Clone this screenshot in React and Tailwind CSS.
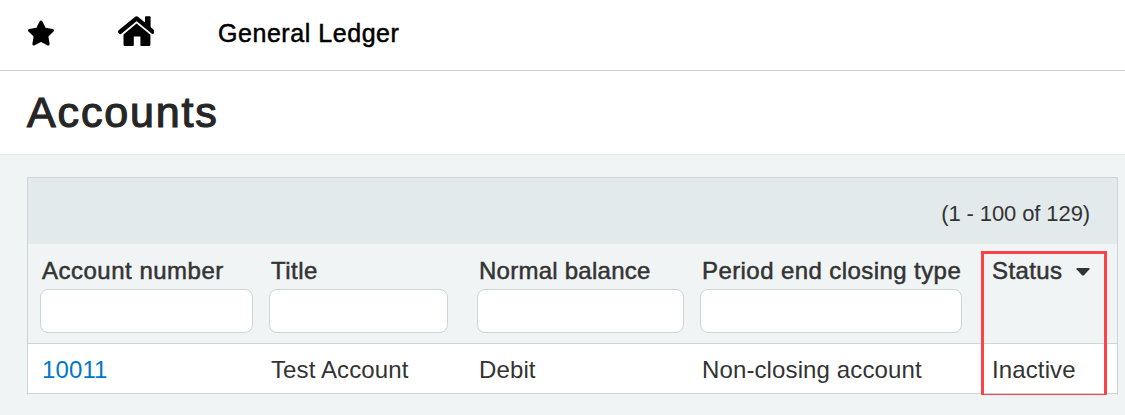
import { FaStar } from "react-icons/fa";

const columns = [
  {
    label: "Account number",
    value: "10011",
    input: "w-[213px]",
    spacing: "tracking-[0.5px]",
    link: true,
  },
  {
    label: "Title",
    value: "Test Account",
    input: "w-[179px]",
    spacing: "tracking-[0.5px]",
  },
  {
    label: "Normal balance",
    value: "Debit",
    input: "w-[207px]",
    spacing: "tracking-[0.25px]",
  },
  {
    label: "Period end closing type",
    value: "Non-closing account",
    input: "w-[262px]",
    spacing: "tracking-[0.42px]",
  },
  {
    label: "Status",
    value: "Inactive",
    spacing: "tracking-[0.4px]",
    sorted: true,
  },
];

const gridCols = "grid grid-cols-[229px_208px_223px_290px_1fr]";

function HomeIcon() {
  return (
    <svg viewBox="0 0 36 30" className="h-[30px] w-[36px]" fill="black">
      <path
        d="M2.3 15.8 18.6 2.4 34.6 15.6"
        fill="none"
        stroke="black"
        strokeWidth="4.4"
        strokeLinecap="round"
        strokeLinejoin="round"
      />
      <path d="M27 1.2q0-1 1-1h3.6q1 0 1 1v13.3L27 9.8z" />
      <path d="M18.6 7.6 32.4 18.8v9.7q0 1.5-1.5 1.5H23.4q-1 0-1-1v-8.4h-6.6v8.4q0 1-1 1H7q-1.5 0-1.5-1.5V18.4z" />
    </svg>
  );
}

export default function App() {
  return (
    <main className="flex h-[415px] flex-col overflow-hidden bg-[#f0f4f5] font-['Liberation_Sans',sans-serif] text-[#333]">
      <nav className="flex h-[71px] items-center border-b border-[#ccd6da] bg-white pb-1 pl-[27px] text-black">
        <FaStar className="h-[26px] w-[28px]" />
        <div className="ml-[63px] mt-[-4px]">
          <HomeIcon />
        </div>
        <span className="ml-[64px] mt-[2px] text-[25px] tracking-[0.55px] [-webkit-text-stroke:0.5px]">
          General Ledger
        </span>
      </nav>
      <header className="flex h-[84px] items-center border-b border-[#e2eaec] bg-white pl-[27px]">
        <h1 className="mt-[-1px] text-[43px] leading-[50px] tracking-[1.85px] text-[#262626] [-webkit-text-stroke:1.2px]">
          Accounts
        </h1>
      </header>

      <section className="pl-[27px] pr-[7px] pt-[22px]">
        <div className="relative h-[218px] border-x border-t border-[#ccd6da]">
          <div className="flex h-[66px] items-center justify-end bg-[#e2eaec] pr-[27px] pt-[5px] text-[22px] tracking-[-0.1px]">
            (1 - 100 of 129)
          </div>
          <div className={`${gridCols} h-[100px] border-b border-[#ccd6da]`}>
            {columns.map((col) => (
              <div key={col.label} className="pl-3 pt-[10px]">
                <div
                  className={`${col.spacing} mb-[2px] flex h-[33px] items-center whitespace-nowrap pl-[2px] text-[24px] leading-[30px] [-webkit-text-stroke:0.5px]`}
                >
                  {col.label}
                  {col.sorted && (
                    <svg
                      viewBox="0 0 14 8"
                      className="ml-[14px] mt-[2px] h-[8px] w-[14px]"
                    >
                      <path d="M1 0h12q1 .2.4 1.2L8 7.2q-1 .9-2 0L.6 1.2Q0 .2 1 0z" fill="#333" />
                    </svg>
                  )}
                </div>
                {col.input && (
                  <input
                    className={`${col.input} block h-[44px] rounded-lg border border-[#ccd6da] bg-white px-3`}
                  />
                )}
              </div>
            ))}
          </div>
          <div
            className={`${gridCols} h-[50px] items-center border-b border-[#ccd6da] bg-white pt-[2px] text-[24px] tracking-[0.12px]`}
          >
            {columns.map((col) => (
              <div key={col.label} className="whitespace-nowrap pl-[14px]">
                {col.link ? (
                  <a href="#" className="text-[#0077c8]">
                    {col.value}
                  </a>
                ) : (
                  col.value
                )}
              </div>
            ))}
          </div>
          {/* highlight around the status column */}
          <div className="pointer-events-none absolute left-[953px] top-[73px] h-[144px] w-[126px] border-[3px] border-b border-[#ff4245]" />
        </div>
      </section>
    </main>
  );
}
